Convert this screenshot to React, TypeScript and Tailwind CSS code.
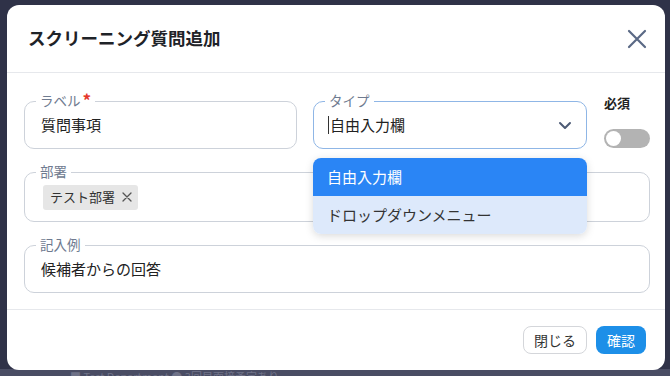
import React from "react";

const font = { fontFamily: '"Noto Sans CJK JP", "Noto Sans", sans-serif' };

function Field({
  label,
  required,
  className = "",
  children,
  focused,
}: {
  label: string;
  required?: boolean;
  className?: string;
  children?: React.ReactNode;
  focused?: boolean;
}) {
  return (
    <div
      className={`relative rounded-[10px] border ${
        focused ? "border-[#8fb6e6]" : "border-[#cdd2da]"
      } ${className}`}
    >
      <span className="absolute -top-[11px] left-[11px] flex items-start bg-white px-[4px] text-[13.5px] leading-[18px] text-[#6f7b90]">
        {label}
        {required && (
          <span className="ml-[2px] text-[17px] font-bold leading-[18px] text-[#e5372b]">*</span>
        )}
      </span>
      {children}
    </div>
  );
}

export default function App() {
  return (
    <div
      className="relative h-[376px] w-[670px] overflow-hidden bg-[#2f3248]"
      style={font}
    >
      <div className="absolute left-0 right-0 top-[369px] h-[7px] bg-[#4a4d64] pl-[70px] text-[11px] leading-[14px] text-[#6f7288] whitespace-nowrap">
        ■ Test Department ● 3回目面接予定あり
      </div>
      <div className="relative ml-[7px] mt-[5px] flex h-[365px] w-[658px] flex-col rounded-[12px] bg-white">
        <div className="flex h-[68px] shrink-0 items-center justify-between border-b border-[#e6e8ec] pl-[21px] pr-[18px]">
          <div className="text-[17.5px] font-bold text-[#1f2328]">
            スクリーニング質問追加
          </div>
          <svg
            width="20"
            height="20"
            viewBox="0 0 20 20"
            fill="none"
            stroke="#5a6985"
            strokeWidth="2.2"
            strokeLinecap="round"
          >
            <path d="M2 2 L18 18 M18 2 L2 18" />
          </svg>
        </div>

        <div className="flex flex-col gap-[23px] pb-[16px] pl-[17px] pr-[15px] pt-[28px]">
          <div className="flex gap-[16px]">
            <Field label="ラベル" required className="h-[48px] w-[273px]">
              <div className="flex h-full items-center pl-[16px] text-[15px] text-[#222]">
                質問事項
              </div>
            </Field>
            <div className="relative z-10 w-[274px]">
              <Field label="タイプ" focused className="h-[48px] w-full">
                <div className="flex h-full items-center justify-between pl-[14px] pr-[14px] text-[15px] text-[#222]">
                  <div className="flex items-center">
                    <span className="mr-[1px] inline-block h-[18px] w-[1px] bg-[#333]" />
                    自由入力欄
                  </div>
                  <svg
                    width="14"
                    height="10"
                    viewBox="0 0 14 10"
                    fill="none"
                    stroke="#4d5b75"
                    strokeWidth="2"
                    strokeLinecap="round"
                    strokeLinejoin="round"
                  >
                    <path d="M2 3 L7 8 L12 3" />
                  </svg>
                </div>
              </Field>
              <div className="absolute left-0 top-[57px] w-full overflow-hidden rounded-[8px] shadow-[0_2px_8px_rgba(0,0,0,0.15)]">
                <div className="flex h-[38px] items-center bg-[#2a85f5] pl-[14px] text-[15px] text-white">
                  自由入力欄
                </div>
                <div className="flex h-[38px] items-center bg-[#dde9fb] pl-[14px] text-[15px] text-[#333]">
                  ドロップダウンメニュー
                </div>
              </div>
            </div>
            <div className="ml-[1px] flex w-[46px] flex-col">
              <div className="-mt-[7px] text-[13px] font-bold leading-[18px] text-[#222]">
                必須
              </div>
              <div className="mt-[17px] flex h-[19px] w-[46px] items-center rounded-full bg-[#b3b3b3] px-[2px]">
                <div className="h-[15px] w-[15px] rounded-full bg-white" />
              </div>
            </div>
          </div>

          <Field label="部署" className="h-[50px] w-full">
            <div className="flex h-full items-center pl-[18px]">
              <div className="flex h-[25px] items-center gap-[7px] rounded-[3px] bg-[#e6e6e6] pl-[7px] pr-[6px] text-[13px] text-[#333]">
                テスト部署
                <svg
                  width="10"
                  height="10"
                  viewBox="0 0 10 10"
                  stroke="#555"
                  strokeWidth="1.3"
                  strokeLinecap="round"
                >
                  <path d="M1 1 L9 9 M9 1 L1 9" />
                </svg>
              </div>
            </div>
          </Field>

          <Field label="記入例" className="h-[48px] w-full">
            <div className="flex h-full items-center pl-[16px] text-[15px] text-[#222]">
              候補者からの回答
            </div>
          </Field>
        </div>

        <div className="flex flex-1 items-start justify-end gap-[9px] border-t border-[#e6e8ec] pr-[19px] pt-[16px]">
          <button className="flex h-[28px] w-[64px] items-center justify-center rounded-[8px] border border-[#d4d6da] bg-white text-[14px] text-[#333]">
            閉じる
          </button>
          <button className="flex h-[28px] w-[50px] items-center justify-center rounded-[8px] bg-[#1d8fe8] text-[14px] text-white">
            確認
          </button>
        </div>
      </div>
    </div>
  );
}
